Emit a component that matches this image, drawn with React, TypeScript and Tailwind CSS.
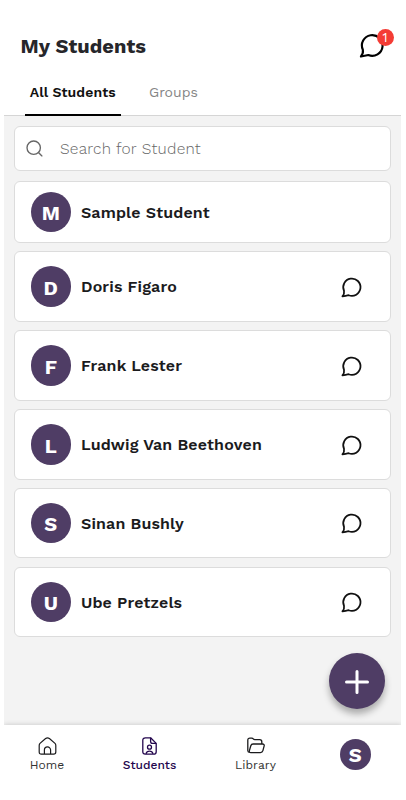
type Student = { name: string; initial: string; height: string; chat: boolean };

const students: Student[] = [
  { name: 'Sample Student', initial: 'M', height: 'h-[62px] mb-2', chat: false },
  { name: 'Doris Figaro', initial: 'D', height: 'h-[71px] mb-2', chat: true },
  { name: 'Frank Lester', initial: 'F', height: 'h-[71px] mb-2', chat: true },
  { name: 'Ludwig Van Beethoven', initial: 'L', height: 'h-[71px] mb-2', chat: true },
  { name: 'Sinan Bushly', initial: 'S', height: 'h-[70px] mb-[9px]', chat: true },
  { name: 'Ube Pretzels', initial: 'U', height: 'h-[70px]', chat: true },
];

function ChatIcon({ className }: { className: string }) {
  return (
    <svg className={className} viewBox="0 0 24 24" fill="none" stroke="currentColor" strokeLinecap="round" strokeLinejoin="round">
      <path d="M4.3 15.8A9.2 9.2 0 1 1 9.2 20.5Q6 21.2 2.6 21.8Q4.9 19.1 4.3 15.8Z" />
    </svg>
  );
}

function HomeIcon() {
  return (
    <svg className="h-[18px] w-[19px]" viewBox="0 0 19 18" fill="none" stroke="currentColor" strokeWidth="1.2" strokeLinejoin="round">
      <path d="M1.2 8.4Q1.2 7.2 2 6.4L7.6 1.5Q9.5 0.2 11.4 1.5L17 6.4Q17.8 7.2 17.8 8.4V15Q17.8 17.2 15.6 17.2H3.4Q1.2 17.2 1.2 15Z" />
      <path d="M6.4 17V13A3.1 3.1 0 0 1 12.6 13V17" />
    </svg>
  );
}

function StudentsIcon() {
  return (
    <svg className="h-[18px] w-[15px]" viewBox="0 0 15 18" fill="none" stroke="currentColor" strokeWidth="1.3" strokeLinejoin="round">
      <path d="M3.4 0.8H8.6L14.2 6.4V14.7Q14.2 17.2 11.7 17.2H3.3Q0.8 17.2 0.8 14.7V3.3Q0.8 0.8 3.4 0.8Z" />
      <path d="M8.6 0.8V4.5Q8.6 6.4 10.5 6.4H14.2" />
      <circle cx="7.5" cy="10.2" r="2" />
      <path d="M4 16.9Q4.7 14.2 7.5 14.2Q10.3 14.2 11 16.9" />
    </svg>
  );
}

function LibraryIcon() {
  return (
    <svg className="h-[17px] w-[18px]" viewBox="0 0 18 17" fill="none" stroke="currentColor" strokeWidth="1.3" strokeLinejoin="round">
      <path d="M2.5 15.4Q0.8 15.2 0.8 13.4V3.2Q0.8 1.1 2.9 1.1H4.7Q5.8 1.1 6.3 1.9Q6.8 2.6 7.8 2.6H12.8Q14.8 2.6 14.8 4.8V7" />
      <path d="M6.1 7H15.4Q17.7 7 17.1 9.2L15.9 13.7Q15.4 15.6 13.4 15.6H3.8Q1.9 15.6 2.4 13.7L3.8 8.7Q4.3 7 6.1 7Z" />
    </svg>
  );
}

export default function App() {
  return (
    <div className="h-[800px] w-[406px] bg-white pl-1 pr-[5px] font-['Work_Sans','Inter',sans-serif] text-[#1b1b1d]">
      <div className="flex h-full flex-col overflow-hidden">
        <header className="flex h-[71px] shrink-0 items-start justify-between pl-[16.5px] pr-[16px] pt-[33px]">
          <h1 className="text-[20px] font-bold leading-[27px] tracking-[0.08px] text-[#26262a]">My Students</h1>
          <div className="relative -mt-px text-black">
            <ChatIcon className="h-[27px] w-[27px] stroke-[1.9]" />
            <span className="absolute -right-[8.5px] -top-[3px] flex h-[17px] w-[17px] items-center justify-center rounded-full bg-[#f43c35] text-[13px] leading-none text-white">1</span>
          </div>
        </header>
        <nav className="flex h-[45px] shrink-0 border-b border-[#d5d5d5] pl-[21px] text-[14px]">
          <div className="-mb-px flex w-[95.5px] justify-center border-b-2 border-black pt-[11px] font-semibold leading-5 tracking-[0.1px] text-[#111]">
            <span>All Students</span>
          </div>
          <div className="ml-[28.5px] pt-[11px] leading-5 text-[#858585]">Groups</div>
        </nav>
        <main className="relative flex h-[609px] shrink-0 flex-col bg-[#f3f3f3] px-[10px] pt-[10px]">
          <div className="mb-[10px] flex h-[45px] shrink-0 items-center rounded-[6px] border border-[#dcdcdc] bg-white pl-[11px] text-[#666]">
            <svg className="h-[17px] w-[17px]" viewBox="0 0 17 17" fill="none" stroke="currentColor" strokeWidth="1.35" strokeLinecap="round">
              <circle cx="7.7" cy="7.7" r="6.7" />
              <path d="M12.5 12.5L15.9 15.9" />
            </svg>
            <span className="ml-[17px] pt-[2px] text-[15.5px] font-light tracking-[0.24px]">Search for Student</span>
          </div>
          {students.map((s) => (
            <div key={s.name} className={`${s.height} flex shrink-0 items-center rounded-[6px] border border-[#dcdcdc] bg-white pl-[15.5px] pr-[28px]`}>
              <div className="flex h-[40.5px] w-[40.5px] items-center justify-center rounded-full bg-[#4f3d65] pt-[2px] text-[20px] font-bold text-white">{s.initial}</div>
              <span className="ml-[10px] flex-1 whitespace-nowrap pt-px text-[16px] font-semibold tracking-[0.14px]">{s.name}</span>
              {s.chat && <ChatIcon className="mt-px h-[22.5px] w-[22.5px] stroke-[1.9] text-[#111]" />}
            </div>
          ))}
          <button className="absolute right-4 top-[536.5px] flex h-[56.5px] w-[56.5px] items-center justify-center rounded-full bg-[#4f3d65] text-white shadow-[0_5px_7px_rgba(0,0,0,0.3)]">
            <svg className="mt-[2px] h-6 w-6" viewBox="0 0 24 24" fill="none" stroke="currentColor" strokeWidth="3" strokeLinecap="round">
              <path d="M12 1.5V22.5M1.5 12H22.5" />
            </svg>
          </button>
        </main>
        <footer className="relative flex h-[75px] shrink-0 bg-white text-[12px] shadow-[0_0_5px_rgba(0,0,0,0.2)]">
          <div className="relative ml-[22px] flex w-[42px] flex-col items-center pt-[12px]">
            <HomeIcon />
            <span className="mt-px whitespace-nowrap leading-[18px] tracking-[0.1px] text-[#333]">Home</span>
          </div>
          <div className="relative ml-[47px] flex w-[69px] flex-col items-center pt-[12px] text-[#24074e]">
            <StudentsIcon />
            <span className="mt-px whitespace-nowrap font-medium leading-[18px]">Students</span>
          </div>
          <div className="relative ml-[46.5px] flex w-[50px] flex-col items-center pt-[12px]">
            <LibraryIcon />
            <span className="mt-[2px] whitespace-nowrap leading-[18px] tracking-[0.1px] text-[#333]">Library</span>
          </div>
          <div className="relative ml-[59px] mt-[13.5px] flex h-[31.5px] w-[31.5px] items-center justify-center rounded-full bg-[#4f3d65] pt-[2px] text-[20px] font-bold text-white">S</div>
        </footer>
      </div>
    </div>
  );
}
